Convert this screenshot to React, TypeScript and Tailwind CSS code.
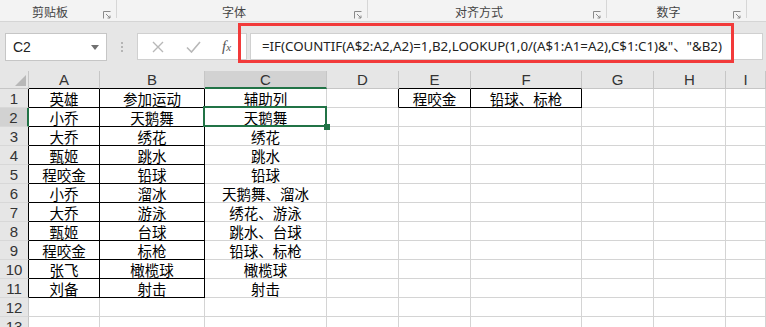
import React from "react"

const cols = [
  { key: "A", w: "w-[71px]" },
  { key: "B", w: "w-[105px]" },
  { key: "C", w: "w-[122px]" },
  { key: "D", w: "w-[72px]" },
  { key: "E", w: "w-[72px]" },
  { key: "F", w: "w-[111px]" },
  { key: "G", w: "w-[72px]" },
  { key: "H", w: "w-[72px]" },
  { key: "I", w: "flex-1" },
]

const data: string[][] = [
  ["英雄", "参加运动", "辅助列", "", "程咬金", "铅球、标枪"],
  ["小乔", "天鹅舞", "天鹅舞"],
  ["大乔", "绣花", "绣花"],
  ["甄姬", "跳水", "跳水"],
  ["程咬金", "铅球", "铅球"],
  ["小乔", "溜冰", "天鹅舞、溜冰"],
  ["大乔", "游泳", "绣花、游泳"],
  ["甄姬", "台球", "跳水、台球"],
  ["程咬金", "标枪", "铅球、标枪"],
  ["张飞", "橄榄球", "橄榄球"],
  ["刘备", "射击", "射击"],
  [],
  [],
]

function Launcher() {
  return (
    <svg width="8" height="8" viewBox="0 0 8 8" className="absolute right-[5px] top-[11px]">
      <path d="M0.5 7.5V0.5H7.5" fill="none" stroke="#8a8a8a" strokeWidth="1" />
      <path d="M3 3L7 7M7 4.5V7H4.5" fill="none" stroke="#8a8a8a" strokeWidth="1" />
    </svg>
  )
}

function RibbonGroup({ label, w }: { label: string; w: string }) {
  return (
    <div className={`relative ${w} h-[18px] border-r border-[#d6d6d6] flex justify-center pr-[16px]`}>
      <span className="text-[12px] leading-[14px] mt-[5px] text-[#444]">{label}</span>
      <Launcher />
    </div>
  )
}

// which cells carry black borders (right / bottom)
function blackRight(r: number, c: number) {
  if (r >= 1 && r <= 11 && (c === 0 || c === 1)) return true
  if (r === 1 && (c === 3 || c === 4 || c === 5)) return true
  return false
}
function blackBottom(r: number, c: number) {
  if (r >= 1 && r <= 11 && (c === 0 || c === 1)) return true
  if (r === 1 && (c === 4 || c === 5)) return true
  return false
}

export default function App() {
  const cjk = { fontFamily: '"Noto Sans CJK SC", "Noto Sans", sans-serif' }
  return (
    <div
      className="w-[766px] h-[327px] overflow-hidden bg-white flex flex-col"
      style={{ fontFamily: '"Liberation Sans", "Noto Sans CJK SC", sans-serif' }}
    >
      {/* ribbon group labels */}
      <div className="h-[22px] shrink-0 bg-[#f3f3f3] border-b border-[#d5d5d5] flex items-start" style={cjk}>
        <RibbonGroup label="剪贴板" w="w-[117px]" />
        <RibbonGroup label="字体" w="w-[251px]" />
        <RibbonGroup label="对齐方式" w="w-[239px]" />
        <RibbonGroup label="数字" w="w-[140px]" />
      </div>

      {/* formula bar */}
      <div className="relative h-[49px] shrink-0 bg-[#e6e6e6] flex items-start pt-[11px] pl-[5px]">
        <div className="w-[102px] h-[28px] bg-white border border-[#c6c6c6] flex items-center justify-between pl-[7px] pr-[7px]">
          <span className="text-[14px] text-[#222]">C2</span>
          <svg width="8" height="5" viewBox="0 0 8 5">
            <path d="M0 0H8L4 5Z" fill="#707070" />
          </svg>
        </div>
        <div className="w-[30px] h-[28px] flex flex-col items-center justify-center gap-[2px]">
          <span className="w-[2px] h-[2px] bg-[#b5b5b5]" />
          <span className="w-[2px] h-[2px] bg-[#b5b5b5]" />
          <span className="w-[2px] h-[2px] bg-[#b5b5b5]" />
        </div>
        <div className="w-[110px] h-[27px] bg-white border border-[#d0d0d0] flex items-center">
          <svg width="12" height="12" viewBox="0 0 12 12" className="ml-[14px]">
            <path d="M1 1L11 11M11 1L1 11" stroke="#b8b8b8" strokeWidth="1.4" />
          </svg>
          <svg width="15" height="12" viewBox="0 0 15 12" className="ml-[22px]">
            <path d="M1 6.5L5.5 11L14 1" fill="none" stroke="#b8b8b8" strokeWidth="1.6" />
          </svg>
          <span
            className="ml-[21px] italic text-[15px] text-[#555] leading-none"
            style={{ fontFamily: '"Liberation Serif", serif' }}
          >
            f<span className="text-[11px]">x</span>
          </span>
        </div>
        <div className="ml-[3px] w-[513px] h-[27px] bg-white border border-[#d0d0d0] flex items-center pl-[11px]">
          <span className="text-[13.3px] text-[#222] whitespace-nowrap" style={{ fontFamily: '"Noto Sans", "Noto Sans CJK SC", sans-serif' }}>
            =IF(COUNTIF(A$2:A2,A2)=1,B2,LOOKUP(1,0/(A$1:A1=A2),C$1:C1)&amp;"、"&amp;B2)
          </span>
        </div>
        {/* red highlight annotation */}
        <div className="absolute left-[238px] top-[1px] w-[496px] h-[40px] border-[3px] border-[#f23a3a]" />
      </div>

      {/* column headers */}
      <div className="h-[18px] shrink-0 flex bg-[#e6e6e6]">
        <div className="w-[29px] h-full border-r border-b border-[#c6c6c6] relative">
          <svg width="11" height="11" viewBox="0 0 11 11" className="absolute left-[15px] top-[4px]">
            <path d="M11 0V11H0Z" fill="#b8b8b8" />
          </svg>
        </div>
        {cols.map((c, i) => {
          const sel = c.key === "C"
          const blackB = i === 0 || i === 1 || i === 4 || i === 5
          return (
            <div
              key={c.key}
              className={`${c.w} h-full flex items-center justify-center text-[15px] leading-none text-[#333] border-r border-[#c6c6c6] ${
                sel ? "bg-[#d2d2d2] border-b-2 border-b-[#217346]" : blackB ? "border-b border-b-black" : "border-b border-b-[#c6c6c6]"
              }`}
            >
              {c.key}
            </div>
          )
        })}
      </div>

      {/* rows */}
      {data.map((row, ri) => {
        const r = ri + 1
        const rowSel = r === 2
        return (
          <div key={r} className="h-[19px] shrink-0 flex">
            <div
              className={`w-[29px] h-full flex items-center justify-center text-[15px] leading-none text-[#333] border-b border-[#d8d8d8] ${
                rowSel
                  ? "bg-[#d2d2d2] border-r-2 border-r-[#217346]"
                  : r <= 11
                  ? "bg-[#e6e6e6] border-r border-r-black"
                  : "bg-[#e6e6e6] border-r border-r-[#c6c6c6]"
              }`}
            >
              {r}
            </div>
            {cols.map((c, ci) => {
              const text = row[ci] || ""
              const sel = r === 2 && ci === 2
              return (
                <div
                  key={c.key}
                  className={`${c.w} h-full relative flex items-center justify-center text-[14.5px] leading-[18px] pt-[1px] text-black whitespace-nowrap border-r border-b ${
                    blackRight(r, ci) ? "border-r-black" : "border-r-[#d4d4d4]"
                  } ${blackBottom(r, ci) ? "border-b-black" : "border-b-[#d4d4d4]"}`}
                  style={cjk}
                >
                  {text}
                  {sel && (
                    <>
                      <div className="absolute left-[-2px] top-[-2px] right-[-1px] bottom-[-1px] border-2 border-[#217346]" />
                      <div className="absolute right-[-4px] bottom-[-4px] w-[6px] h-[6px] bg-[#217346] z-10" />
                    </>
                  )}
                </div>
              )
            })}
          </div>
        )
      })}
    </div>
  )
}
